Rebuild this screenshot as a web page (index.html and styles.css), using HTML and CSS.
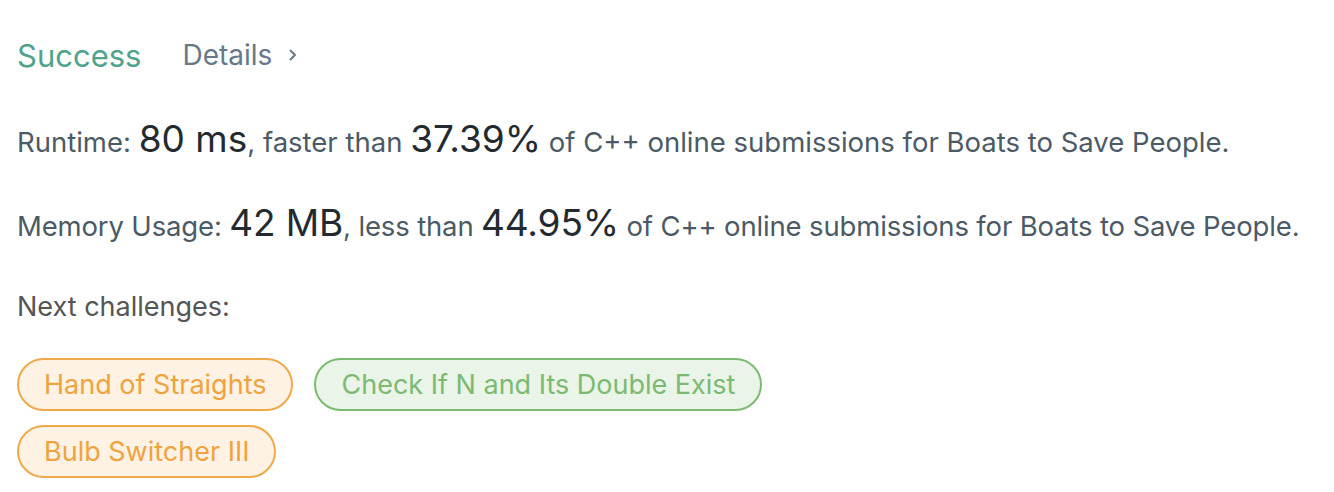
FILE: index.html
```html
<!DOCTYPE html>
<html>
<head>
<meta charset="utf-8">
<link rel="stylesheet" href="styles.css">
</head>
<body>
<div class="page">
  <div class="status">
    <span class="success">Success</span>
    <span class="details">Details <svg class="chev" width="10" height="14" viewBox="0 0 10 14"><path d="M2.5 2.5l4.5 4.5-4.5 4.5" fill="none" stroke="#667988" stroke-width="2" stroke-linecap="round" stroke-linejoin="round"/></svg></span>
  </div>
  <p class="stat">Runtime: <span class="big">80 ms</span>, faster than <span class="big">37.39%</span> of C++ online submissions for Boats to Save People.</p>
  <p class="stat">Memory Usage: <span class="big">42 MB</span>, less than <span class="big">44.95%</span> of C++ online submissions for Boats to Save People.</p>
  <p class="next">Next challenges:</p>
  <div class="tags">
    <span class="tag medium">Hand of Straights</span>
    <span class="tag easy">Check If N and Its Double Exist</span>
    <span class="tag medium">Bulb Switcher III</span>
  </div>
</div>
</body>
</html>
```
FILE: styles.css
```css
html, body { margin: 0; padding: 0; background: #fff; }
body { font-family: Inter, "Helvetica Neue", Arial, sans-serif; }
.page { padding: 35px 16px 0 17px; width: 790px; }
.status { display: flex; align-items: center; height: 40px; }
.success { color: #4fa38d; font-size: 31px; font-weight: 400; }
.details { color: #667988; font-size: 28px; margin-left: 41px; display: inline-flex; align-items: center; }
.chev { margin-left: 16px; }
.stat { margin: 0; color: #4b5a65; font-size: 27.5px; white-space: nowrap; line-height: 40px; height: 40px; }
.stat:first-of-type { margin-top: 45px; }
.stat + .stat { margin-top: 44px; }
.big { color: #232b31; font-size: 37px; line-height: 1; }
.stat:nth-of-type(2) { letter-spacing: -0.15px; }
.next { margin: 43px 0 0; color: #555; font-size: 27px; line-height: 40px; }
.tags { display: flex; flex-wrap: wrap; gap: 14px 21px; margin-top: 31px; }
.tag { display: inline-flex; align-items: center; height: 53px; box-sizing: border-box; padding: 0 25px; border-radius: 27px; font-size: 27px; border: 2px solid; }
.medium { color: #f0a33d; border-color: #f0a94a; background: #fdf2e3; }
.easy { color: #7cba72; border-color: #7cba72; background: #eaf4e8; }
```
